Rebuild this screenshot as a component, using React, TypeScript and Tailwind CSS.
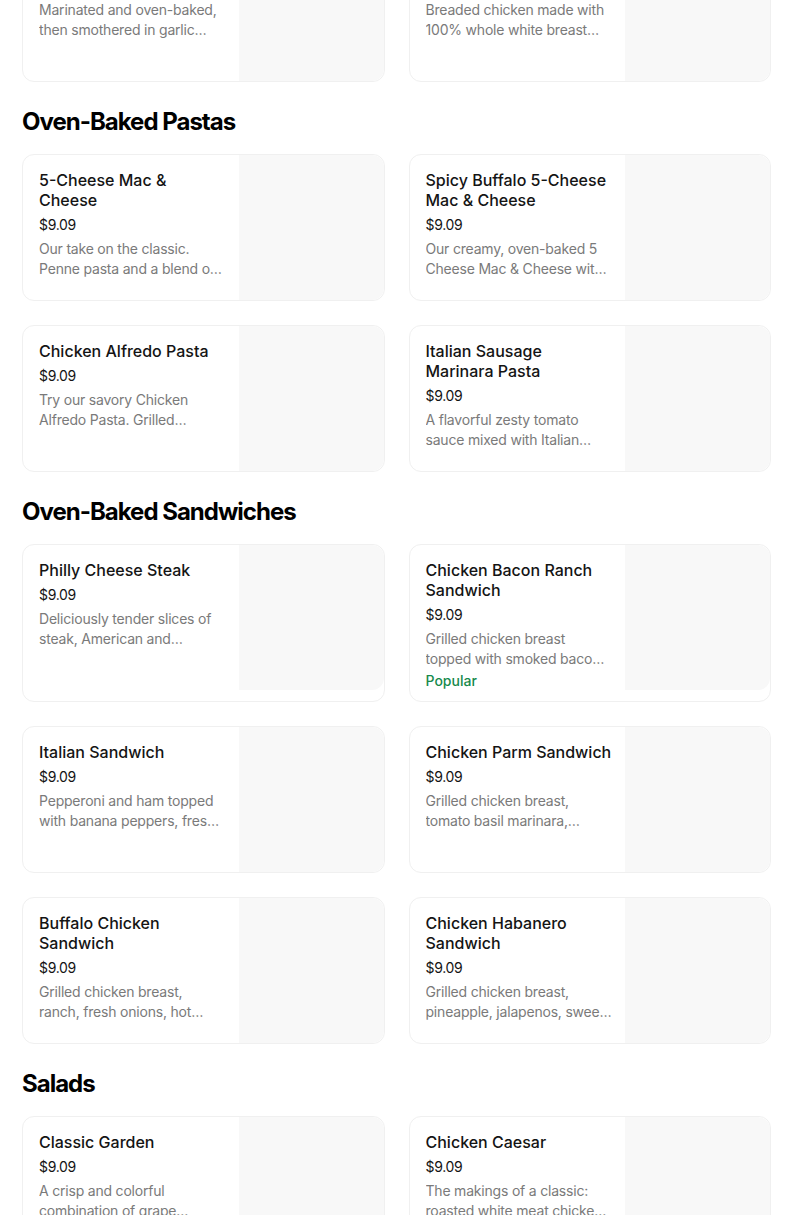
import React from "react";

type Item = { name: string; price: string; desc: string; popular?: boolean };
type Section = { title?: string; items: Item[] };

const sections: Section[] = [
  {
    items: [
      { name: "Garlic Chicken", price: "$9.09", desc: "Marinated and oven-baked, then smothered in garlic parmesan sauce and cheese." },
      { name: "Chicken Tenders", price: "$9.09", desc: "Breaded chicken made with 100% whole white breast meat, oven-baked." },
    ],
  },
  {
    title: "Oven-Baked Pastas",
    items: [
      { name: "5-Cheese Mac & Cheese", price: "$9.09", desc: "Our take on the classic. Penne pasta and a blend of five cheeses baked to perfection." },
      { name: "Spicy Buffalo 5-Cheese Mac & Cheese", price: "$9.09", desc: "Our creamy, oven-baked 5 Cheese Mac & Cheese with spicy buffalo sauce." },
      { name: "Chicken Alfredo Pasta", price: "$9.09", desc: "Try our savory Chicken Alfredo Pasta. Grilled chicken breast with creamy alfredo sauce." },
      { name: "Italian Sausage Marinara Pasta", price: "$9.09", desc: "A flavorful zesty tomato sauce mixed with Italian sausage and penne pasta." },
    ],
  },
  {
    title: "Oven-Baked Sandwiches",
    items: [
      { name: "Philly Cheese Steak", price: "$9.09", desc: "Deliciously tender slices of steak, American and provolone cheese, onions and peppers." },
      { name: "Chicken Bacon Ranch Sandwich", price: "$9.09", desc: "Grilled chicken breast topped with smoked bacon, ranch and provolone cheese.", popular: true },
      { name: "Italian Sandwich", price: "$9.09", desc: "Pepperoni and ham topped with banana peppers, fresh green peppers and onions." },
      { name: "Chicken Parm Sandwich", price: "$9.09", desc: "Grilled chicken breast, tomato basil marinara, parmesan and provolone cheese." },
      { name: "Buffalo Chicken Sandwich", price: "$9.09", desc: "Grilled chicken breast, ranch, fresh onions, hot buffalo sauce and cheese." },
      { name: "Chicken Habanero Sandwich", price: "$9.09", desc: "Grilled chicken breast, pineapple, jalapenos, sweet mango habanero sauce." },
    ],
  },
  {
    title: "Salads",
    items: [
      { name: "Classic Garden", price: "$9.09", desc: "A crisp and colorful combination of grape tomatoes, onions and green peppers." },
      { name: "Chicken Caesar", price: "$9.09", desc: "The makings of a classic: roasted white meat chicken, parmesan and croutons." },
    ],
  },
];

function ItemCard({ item }: { item: Item }) {
  return (
    <div className="flex border border-[#f0f0f0] rounded-xl overflow-hidden bg-white min-h-[146px]">
      <div className="flex-1 min-w-0 pl-4 pr-[13px] pt-[15px] pb-[10px]">
        <h3 className="text-[16px] leading-5 font-medium text-[#141414]">{item.name}</h3>
        <p className="mt-[5px] text-[14px] leading-5 text-[#141414] tracking-[-0.3px]">{item.price}</p>
        <p className="mt-1 text-[14px] leading-5 text-[#7a7a7a] tracking-[-0.2px] line-clamp-2">{item.desc}</p>
        {item.popular && (
          <p className="mt-[2px] text-[14px] leading-5 font-medium text-[#178a4c]">Popular</p>
        )}
      </div>
      <div className="w-[145px] h-[145px] shrink-0 self-start bg-[#f8f8f8] rounded-r-xl" />
    </div>
  );
}

export default function App() {
  return (
    <div className="bg-white h-[1215px] overflow-hidden font-['Inter',sans-serif]">
      <div className="pl-[22px] pr-[33px] -mt-[65px]">
        {sections.map((section, i) => (
          <section key={i}>
            {section.title && (
              <h2 className="mt-6 mb-4 text-[24px] leading-8 font-bold text-black tracking-[-1px]">
                {section.title}
              </h2>
            )}
            <div className="grid grid-cols-2 gap-6">
              {section.items.map((item) => (
                <ItemCard key={item.name} item={item} />
              ))}
            </div>
          </section>
        ))}
      </div>
    </div>
  );
}
